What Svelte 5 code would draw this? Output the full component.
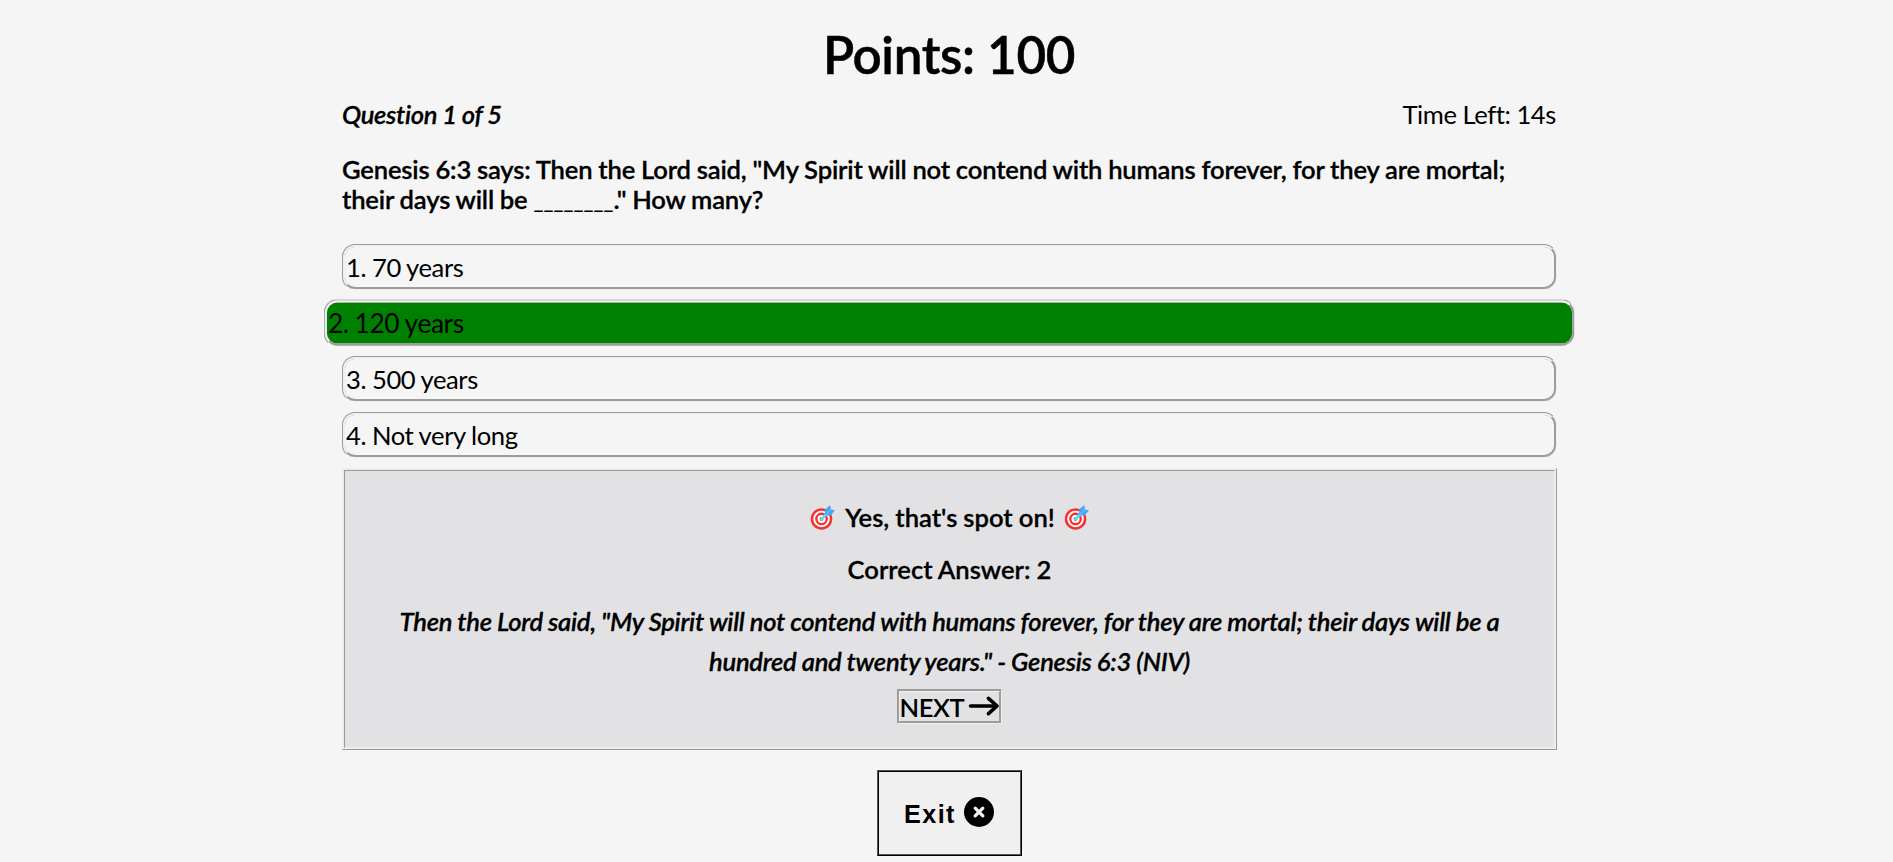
<script>
  const options = ['70 years', '120 years', '500 years', 'Not very long'];
  const correct = 1;
</script>

{#snippet target()}
  <svg class="target" viewBox="0 0 26 26" aria-hidden="true">
    <circle cx="12" cy="15" r="9.9" fill="#fff" stroke="#f8312f" stroke-width="2.6" />
    <circle cx="12" cy="15" r="5.4" fill="#fff" stroke="#f8312f" stroke-width="2.4" />
    <circle cx="12" cy="15" r="2" fill="#f8312f" />
    <path d="M12 15 20 7" stroke="#50e2ff" stroke-width="3" stroke-linecap="round" />
    <path d="M15.500 10.500V5.500L21 .5l.8 4.700L26 6l-4.500 5.500h-5z" fill="#46a4fb" />
    <path d="M16.500 10.500 22 5" stroke="#50c8ff" stroke-width="1.4" />
  </svg>
{/snippet}

<main>
  <h1>Points: 100</h1>
  <div class="status">
    <strong>Question 1 of 5</strong>
    <span>Time Left: 14s</span>
  </div>
  <p class="question">
    Genesis 6:3 says: Then the Lord said, "My Spirit will not contend with humans forever, for they are mortal; their days will be <span class="blank">________</span>." How many?
  </p>
  <div class="options">
    {#each options as option, i}
      <div class="option" class:correct={i === correct}>{i + 1}. {option}</div>
    {/each}
  </div>
  <section>
    <p class="result">{@render target()}<span>Yes, that's spot on!</span>{@render target()}</p>
    <p class="answer">Correct Answer: 2</p>
    <p class="verse">Then the Lord said, "My Spirit will not contend with humans forever, for they are mortal; their days will be a hundred and twenty years." - Genesis 6:3 (NIV)</p>
    <button class="next">
      <span>NEXT</span>
      <svg viewBox="0 0 31 20" aria-hidden="true"><path d="M2.500 10H29M20.500 2.300 29 10l-8.500 7.700" fill="none" stroke="#000" stroke-width="3.600" stroke-linecap="round" stroke-linejoin="round" /></svg>
    </button>
  </section>
  <button class="exit">
    <span>Exit</span>
    <svg viewBox="0 0 30 30" aria-hidden="true"><circle cx="15" cy="15" r="15" /><path d="m11.200 11.200 7.600 7.600m0-7.600-7.600 7.600" stroke="#f0f0f0" stroke-width="3.3" stroke-linecap="round" /></svg>
  </button>
</main>

<style>
  :global(body) { background: #f5f5f5; overflow: hidden; }
  main {
    box-sizing: border-box;
    width: 1214px;
    margin: 0 0 0 342px;
    padding-top: 24px;
    display: flex;
    flex-direction: column;
    color: #000;
    font: 400 25.6px/30px Lato, sans-serif;
    font-variant-ligatures: none;
    letter-spacing: -0.4px;
    word-spacing: -0.3px;
  }
  h1 { margin: 0; font-size: 51.2px; font-weight: 600; line-height: 61px; text-align: center; letter-spacing: -0.35px; word-spacing: 0; -webkit-text-stroke: 0.5px #000; }
  .status { display: flex; justify-content: space-between; margin-top: 14px; }
  .status strong { font-style: italic; font-weight: 600; letter-spacing: -0.35px; word-spacing: -0.3px; -webkit-text-stroke: 0.3px #000; }
  p { margin: 0; font-weight: 600; letter-spacing: -0.17px; word-spacing: -0.3px; -webkit-text-stroke: 0.3px #000; }
  .question { margin-top: 25px; }
  .blank { font-size: 21.6px; line-height: 1; letter-spacing: 0; -webkit-text-stroke: 0; }
  .options { display: flex; flex-direction: column; gap: 10.5px; margin-top: 30px; }
  .option {
    box-sizing: border-box;
    width: 1215px;
    height: 45.5px;
    padding: 5px 0 0 1px;
    border: 3px groove #f0f0f0;
    border-radius: 13px;
  }
  .correct { background: green; transform: scale(1.03); }
  section {
    box-sizing: border-box;
    width: 1215px;
    height: 282px;
    margin-top: 10.5px;
    padding: 26px 45px 0;
    display: flex;
    flex-direction: column;
    align-items: center;
    border: 3px ridge #ededed;
    background: #e2e2e5;
    text-align: center;
    line-height: 40px;
  }
  .result, .answer { letter-spacing: 0; }
  .result { display: flex; align-items: center; }
  .result span { margin: 0 9px 0 10px; }
  .target { width: 25px; height: 26px; }
  .answer { margin-top: 12px; }
  .verse { margin-top: 12px; font-style: italic; letter-spacing: -0.27px; }
  button { color: #000; }
  .next {
    box-sizing: border-box;
    width: 105px;
    height: 35px;
    margin: 8px 1px 0 0;
    padding: 0;
    display: flex;
    align-items: center;
    justify-content: space-between;
    border: 3px groove #f0f0f0;
    background: transparent;
    font: 600 25.6px/30px Lato, sans-serif;
    letter-spacing: -0.4px;
  }
  .next svg { width: 31px; height: 20px; margin-top: -2px; }
  .exit {
    box-sizing: border-box;
    align-self: center;
    width: 145px;
    height: 86px;
    margin-top: 20px;
    padding: 0;
    display: flex;
    align-items: center;
    justify-content: center;
    gap: 8px;
    border: 2px ridge #000;
    background: #f0f0f0;
    font: bold 25.200px "Liberation Sans", sans-serif;
    letter-spacing: 1.4px;
  }
  .exit span { padding-top: 2px; }
  .exit svg { width: 30px; height: 30px; margin-top: -2px; }
</style>
